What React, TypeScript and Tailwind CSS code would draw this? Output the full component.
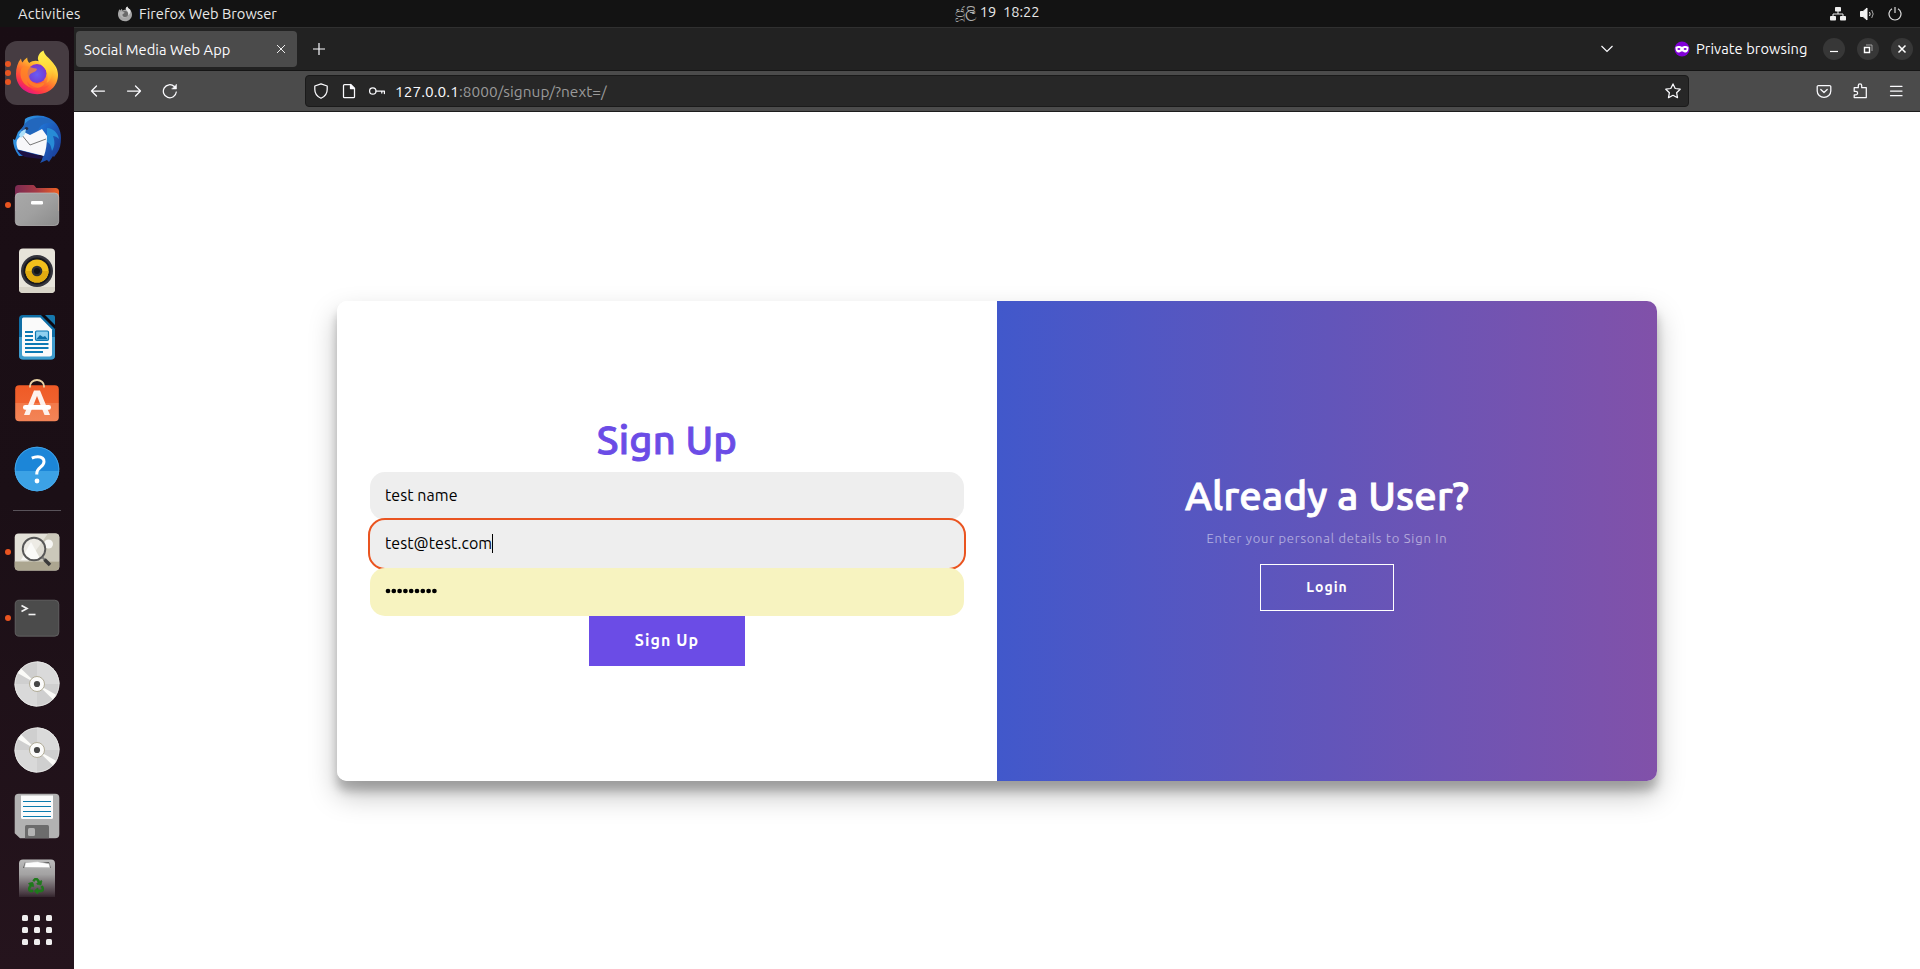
import React from "react";
import { FaRecycle } from "react-icons/fa";

type SvgProps = { children: React.ReactNode };

function DockIcon({ children }: SvgProps) {
  return (
    <svg width="48" height="48" viewBox="0 0 48 48" className="block shrink-0">
      {children}
    </svg>
  );
}

function DockCell({ dots = 0, active = false, children }: { dots?: number; active?: boolean; children: React.ReactNode }) {
  return (
    <div className="relative flex h-[66px] w-[74px] shrink-0 items-center justify-center">
      <div className={active ? "flex h-16 w-16 items-center justify-center rounded-xl bg-[#463c42]" : "flex h-16 w-16 items-center justify-center"}>
        {children}
      </div>
      <div className="absolute left-[5px] top-0 flex h-full flex-col items-center justify-center gap-[2.6px]">
        {Array.from({ length: dots }, (_, i) => (
          <span key={i} className="h-[6px] w-[6px] rounded-full bg-[#e95420]" />
        ))}
      </div>
    </div>
  );
}

function Firefox() {
  return (
    <DockIcon>
      <defs>
        <linearGradient id="ff-body" x1="0.85" y1="0.1" x2="0.25" y2="0.95">
          <stop offset="0" stopColor="#fff44f" />
          <stop offset="0.3" stopColor="#ffb52e" />
          <stop offset="0.58" stopColor="#ff6a30" />
          <stop offset="0.82" stopColor="#ff3647" />
          <stop offset="1" stopColor="#e31587" />
        </linearGradient>
        <linearGradient id="ff-tail" x1="0.5" y1="0" x2="0.6" y2="1">
          <stop offset="0" stopColor="#fff24d" />
          <stop offset="0.6" stopColor="#ffd338" />
          <stop offset="1" stopColor="#ff9a2b" />
        </linearGradient>
        <radialGradient id="ff-globe" cx="0.5" cy="0.55" r="0.6">
          <stop offset="0" stopColor="#6a5cf5" />
          <stop offset="0.6" stopColor="#6f45dc" />
          <stop offset="1" stopColor="#8a2bc6" />
        </radialGradient>
      </defs>
      <path d="M8 9.500c.2 2 .8 3 1.600 4 1-2 2.500-3.500 4.600-5 0 2.200.6 4 2 5.500C20 11 25 11 30 14c5 1 9 4 10 2-.5-1.500-1-2.500-1.500-3.200 4 3.200 6.500 8 6.500 13.200C45 37 36 45.200 24.300 45.200 12 45.200 3 36.500 3 25c0-5.500 1.500-11.500 5-15.500z" fill="url(#ff-body)" />
      <circle cx="24" cy="24.500" r="9.500" fill="url(#ff-globe)" />
      <path d="M30.500 1.500c1 4.500 4.500 6.500 7.500 10 3 3.500 4.500 6 4.500 11-1-2-2-3-3.500-4 1 8-1 13-5.500 15.500 1.500-3 1.500-6.500.5-10-1.500-6.500-8-8.500-9-13.500-.5-3.500 2-7.500 5.500-9z" fill="url(#ff-tail)" />
      <path d="M9 18.500c3.500-1.500 7-1 9.500 0 2 .8 4.500.7 5.500 1.500-.5 2.500-3 3-5 4-2 1-3.500 2.500-2.500 5 2 5 7 7 11 5.500 2-.8 4-.2 4 .6-2 3-6 4.400-10 4.200-8-.5-13.500-6.800-14-13.300-.2-3 .2-5.500 1.500-7.500z" fill="#ff8a25" opacity="0.75" />
      <path d="M14 32c4 7 14 9 22 4-3 4-8 6-13 5.500-5-.5-8-4.500-9-9.500z" fill="#ff4f3c" opacity="0.7" />
    </DockIcon>
  );
}

function Thunderbird() {
  return (
    <DockIcon>
      <defs>
        <linearGradient id="tb" x1="0" y1="0.2" x2="1" y2="0.7">
          <stop offset="0" stopColor="#3aa5e8" />
          <stop offset="0.5" stopColor="#1f6fd0" />
          <stop offset="1" stopColor="#1b3f9a" />
        </linearGradient>
      </defs>
      <path d="M12 4C17 0 28-1 36 3c8 4 12 12 12 20 0 6-1 11-4 15l-3 4-1-1-4 6-2-2-7 3c2-3 3-5 2-8L6 41C2 36 0 30 0 24l2 1 3-8 6-6z" fill="url(#tb)" />
      <path d="M8 16C11 6 20 1 31 3c5 1 9 3 11 6-6-2-12-1-15 3-3 5-4 8-10 9-4 .5-6-2-9-5z" fill="#2267bd" />
      <path d="M34 13c6 0 11 5 12 11-2-2-4-3-6-3 2 5 2 10-1 15-1-5-2-8-5-9z" fill="#278bd6" />
      <path d="M4 25l7-8 6 3 12-6 5 7c0 8-1 14-3 20L5 34.500C3.500 31 3 28 4 25z" fill="#f8f8fa" />
      <path d="M8 19l9 11 16-6" fill="none" stroke="#777" strokeWidth="1" />
      <path d="M4 34.500l26.500 7L28 44l-16-2C8 40 5.500 37.500 4 34.500z" fill="#1c1144" />
      <ellipse cx="13.500" cy="13.500" rx="1.800" ry="1.500" fill="#283048" />
      <path d="M6 20c1.500-3 3.500-5 7-6l-1 5-4 4z" fill="#aee0f8" />
    </DockIcon>
  );
}

function Files() {
  return (
    <DockIcon>
      <defs>
        <linearGradient id="fl-back" x1="0" x2="1">
          <stop offset="0" stopColor="#7a2a52" />
          <stop offset="0.5" stopColor="#a63a45" />
          <stop offset="1" stopColor="#ee6224" />
        </linearGradient>
        <linearGradient id="fl-front" x1="0" y1="0" x2="1" y2="1">
          <stop offset="0" stopColor="#a8a8a8" />
          <stop offset="0.5" stopColor="#a0a0a0" />
          <stop offset="1" stopColor="#8b8b8b" />
        </linearGradient>
      </defs>
      <path d="M2 7.500A3.500 3.500 0 015.500 4h14c1.500 0 2 .6 3 2l.8 1H42.500A3.500 3.500 0 0146 10.500V30H2z" fill="url(#fl-back)" />
      <rect x="2.300" y="12" width="43.400" height="32.500" rx="4" fill="url(#fl-front)" stroke="#bdbdbd" strokeWidth="0.700" />
      <rect x="18" y="20" width="12" height="3.500" rx="1.300" fill="#fff" />
    </DockIcon>
  );
}

function Rhythmbox() {
  return (
    <DockIcon>
      <rect x="6" y="1.500" width="36" height="44.500" rx="4" fill="#e7e4da" />
      <path d="M6 40h36v2a4 4 0 01-4 4H10a4 4 0 01-4-4z" fill="#d8d4c8" />
      <circle cx="24" cy="24" r="16" fill="#34343c" />
      <circle cx="24" cy="24" r="13.600" fill="#17171c" />
      <circle cx="24" cy="24" r="11.600" fill="#f2c01c" />
      <path d="M12.400 24a11.600 11.600 0 0023.200 0z" fill="#e0aa10" />
      <circle cx="24" cy="24" r="5.300" fill="#2d2f33" />
      <circle cx="24" cy="24" r="3" fill="#121215" />
    </DockIcon>
  );
}

function Writer() {
  return (
    <DockIcon>
      <path d="M10 2h18.500L42 15.500V42.500a4 4 0 01-4 4H10a4 4 0 01-4-4V6a4 4 0 014-4z" fill="#0f6ea5" />
      <path d="M6 24h36v18.500a4 4 0 01-4 4H10a4 4 0 01-4-4z" fill="#3e9ccd" />
      <path d="M10.500 4.500h16.800L39 16.500V41a2.500 2.500 0 01-2.500 2.500h-25A2.500 2.500 0 019 41V6a1.500 1.500 0 011.500-1.500z" fill="#fafafa" />
      <path d="M28 2h12a2 2 0 012 2v12z" fill="#0d0910" />
      <path d="M32 2h8a2 2 0 012 2v8z" fill="#1678ad" />
      <path d="M12 19h8M12 23h8M12 27h8M12 31h23.500M12 35h23.500M12 39h18" stroke="#0c79b4" strokeWidth="2" />
      <rect x="22.500" y="18" width="13" height="9.500" rx="1.200" fill="#8fd0f0" stroke="#0c79b4" strokeWidth="1.200" />
      <path d="M23 26.500l4-4.500 3 2 2-1 3 3.500z" fill="#0c6fa8" />
    </DockIcon>
  );
}

function Software() {
  return (
    <DockIcon>
      <defs>
        <linearGradient id="sw" x1="0" y1="0" x2="0" y2="1">
          <stop offset="0" stopColor="#ef5a26" />
          <stop offset="0.49" stopColor="#f0622f" />
          <stop offset="0.5" stopColor="#f37a4a" />
          <stop offset="1" stopColor="#f28457" />
        </linearGradient>
      </defs>
      <rect x="2.200" y="6.200" width="43.600" height="36" rx="4" fill="url(#sw)" />
      <path d="M17 8.500V7a7 6 0 0114 0v1.500" fill="none" stroke="#e9d2a4" strokeWidth="1.800" />
      <path d="M21 11.500h6l10 24.500h-5.500L24 17l-7.500 19H11z" fill="#fdf1ec" />
      <rect x="10" y="26" width="28" height="4.800" rx="2.200" fill="#fff" />
    </DockIcon>
  );
}

function Help() {
  return (
    <DockIcon>
      <circle cx="24" cy="24" r="22.300" fill="#1c86d8" />
      <path d="M1.700 26h44.600A22.300 22.300 0 0124 46.300 22.300 22.300 0 011.700 26z" fill="#3ca2e6" />
      <circle cx="24" cy="24" r="21.800" fill="none" stroke="#4aa8e8" strokeWidth="0.800" />
      <path d="M18.800 13.200c2-1 4-1.500 6-1.500 4 0 6.200 2 6.200 5 0 5-7 6-7.200 11.300v1.500" fill="none" stroke="#fff" strokeWidth="3" />
      <circle cx="24" cy="36" r="2.400" fill="#fff" />
    </DockIcon>
  );
}

function ImageViewer() {
  return (
    <DockIcon>
      <rect x="1.700" y="5.500" width="44.600" height="37" rx="4" fill="#e3e1d8" />
      <path d="M35 5.500h7.300a4 4 0 014 4v24H15z" fill="#cbc8ba" />
      <path d="M1.700 33.500h44.600v5a4 4 0 01-4 4H5.700a4 4 0 01-4-4z" fill="#aca690" />
      <circle cx="35.500" cy="16" r="4.500" fill="#f6f6f3" />
      <path d="M8 32l10-18 10 18z" fill="#f7f7f4" />
      <circle cx="21" cy="21" r="11.300" fill="#fff" fillOpacity="0.350" stroke="#575757" strokeWidth="1.900" />
      <path d="M29.500 29.500l3 3" stroke="#777" strokeWidth="2" />
      <path d="M31.500 31.500l5.500 5.500" stroke="#3b3b3b" strokeWidth="3.600" />
    </DockIcon>
  );
}

function Terminal() {
  return (
    <DockIcon>
      <rect x="2.200" y="6.200" width="43.600" height="36" rx="4" fill="#4b4b4b" stroke="#6a6a6a" strokeWidth="0.800" />
      <path d="M8.500 11.500l5.500 3-5.500 3" fill="none" stroke="#f2f2f2" strokeWidth="1.700" />
      <path d="M15.500 20.500h7" stroke="#f2f2f2" strokeWidth="1.600" />
    </DockIcon>
  );
}

function Disc() {
  return (
    <DockIcon>
      <circle cx="24" cy="24" r="22.400" fill="#cfcfcf" />
      <path d="M24 24V1.600A22.400 22.400 0 0146.400 24z" fill="#dadada" />
      <path d="M24 24v22.400A22.400 22.400 0 011.600 24z" fill="#d9d9d9" />
      <path d="M24 24L4.500 13 8 8.500zM24 24l19.500 11L40 39.500z" fill="#fbfbf8" />
      <circle cx="24" cy="24" r="22" fill="none" stroke="#e6e6e4" strokeWidth="0.800" />
      <circle cx="24" cy="24" r="7.500" fill="#fbfbfa" stroke="#aca68e" strokeWidth="0.900" />
      <circle cx="24" cy="24" r="3.100" fill="#464646" />
    </DockIcon>
  );
}

function Floppy() {
  return (
    <DockIcon>
      <path d="M5.700 1.700h36.600a4 4 0 014 4v36.600a4 4 0 01-4 4H7l-5.300-5V5.700a4 4 0 014-4z" fill="#b2b2b2" />
      <path d="M8 3.500h32v22a1.500 1.500 0 01-1.500 1.500h-29A1.500 1.500 0 018 25.500z" fill="#fbfbfb" />
      <path d="M10 9.500h28M10 14.500h28M10 19.500h28M10 24.500h28" stroke="#0a7bad" strokeWidth="1.100" />
      <path d="M12 46.300V34.500A1.500 1.500 0 0113.500 33h21a1.500 1.500 0 011.500 1.500v11.800z" fill="#6c6c6c" />
      <rect x="15" y="36" width="7" height="8" rx="1.500" fill="#b4b4b4" />
    </DockIcon>
  );
}

function Trash() {
  return (
    <DockIcon>
      <defs>
        <linearGradient id="tr" x1="0" y1="0" x2="0" y2="1">
          <stop offset="0" stopColor="#bcbcbc" />
          <stop offset="0.4" stopColor="#a3a2a2" />
          <stop offset="0.9" stopColor="#4a3c44" />
          <stop offset="1" stopColor="#33252d" />
        </linearGradient>
      </defs>
      <path d="M10 1.500h28a4 4 0 014 4V39H6V5.500a4 4 0 014-4z" fill="url(#tr)" />
      <path d="M10 10L12 4h24l2 6z" fill="#5d5d5d" />
      <path d="M11.500 9.500l1-5 12-.8 11.500 2 1 4z" fill="#fdfdfd" stroke="#c5c5c5" strokeWidth="0.600" />
      <FaRecycle x="15" y="20" width="18" height="18" color="#1f7a1b" stroke="#1f7a1b" strokeWidth="22" />
    </DockIcon>
  );
}

function Dock() {
  return (
    <aside className="flex h-[942px] w-[74px] shrink-0 flex-col bg-linear-to-b from-[#190d14] via-[#1b0f16] to-[#25141d] pt-[13px]">
      <DockCell dots={3} active>
        <Firefox />
      </DockCell>
      <DockCell><Thunderbird /></DockCell>
      <DockCell dots={1}><Files /></DockCell>
      <DockCell><Rhythmbox /></DockCell>
      <DockCell><Writer /></DockCell>
      <DockCell><Software /></DockCell>
      <DockCell><Help /></DockCell>
      <div className="flex h-[17px] shrink-0 items-center justify-center">
        <div className="h-px w-12 bg-[#59535a]" />
      </div>
      <DockCell dots={1}><ImageViewer /></DockCell>
      <DockCell dots={1}><Terminal /></DockCell>
      <DockCell><Disc /></DockCell>
      <DockCell><Disc /></DockCell>
      <DockCell><Floppy /></DockCell>
      <div className="h-12 shrink-0 overflow-hidden">
        <DockCell><Trash /></DockCell>
      </div>
      <div className="flex justify-center pt-[18px]">
        <div className="grid grid-cols-3 gap-[6px]">
          {Array.from({ length: 9 }, (_, i) => (
            <span key={i} className="h-[6px] w-[6px] rounded-[1.5px] bg-[#efeeee]" />
          ))}
        </div>
      </div>
    </aside>
  );
}

function TopBar() {
  return (
    <header className="grid h-[27px] shrink-0 grid-cols-3 bg-[#131313] text-[14.667px] leading-[26px] text-[#e8e8e8]">
      <div className="flex items-center pl-[18px]">
        <span className="w-[99px] whitespace-nowrap tracking-[0.25px]">Activities</span>
        <svg width="16" height="16" viewBox="0 0 48 48" className="mr-[6px] block">
          <path d="M8 9.500l2 4 4.500-5 2 5.500C20 11 24 11 27 12c-2-4 0-8 4-10.500 1 4 4 6 7 9 4 4 7 9 7 15C45 37 36 46 24 46S3 36.500 3 25c0-5.500 1.500-11.500 5-15.500z" fill="#a5a5a5" />
          <path d="M31 1.500c-4 3-6 7-4 10 4 4 8 8 7 16 5-4 8-10 6-16-3-3-8-5-9-10z" fill="#e4e4e4" />
          <circle cx="24" cy="24" r="9" fill="#6a6a6a" />
          <path d="M9 18c5-2 10 0 14 1.500-1 4-7 3-7 8 2 6 8 8 13 6-3 4-14 4-18-4-2-4-3-8-2-11.500z" fill="#b4b4b4" />
        </svg>
        <span className="whitespace-nowrap">Firefox Web Browser</span>
      </div>
      <div className="flex justify-center whitespace-pre pl-[75px] leading-[24px]">
        <span><span className="text-[#b0b0b0]">ජූලි</span> 19  18:22</span>
      </div>
      <div className="flex items-center justify-end gap-[13px] pr-[18px]">
        <svg width="16" height="14" viewBox="0 0 16 14" className="block">
          <g fill="#eee">
            <rect x="5" y="0" width="6" height="4.500" rx="0.800" />
            <rect x="0" y="9" width="6" height="4.500" rx="0.800" />
            <rect x="10" y="9" width="6" height="4.500" rx="0.800" />
          </g>
          <path d="M8 4v3M3 9.500V7h10v2.500" fill="none" stroke="#eee" />
        </svg>
        <svg width="16" height="14" viewBox="0 0 16 14" className="block">
          <path d="M1.500 4.500h2.500L8 1v12L4 9.500H1.500z" fill="#f2f2f2" stroke="#f2f2f2" strokeLinejoin="round" />
          <path d="M10.500 5q1.300 2 0 4" fill="none" stroke="#eee" />
          <path d="M12.700 3q3 4 0 8" fill="none" stroke="#aaa" />
        </svg>
        <svg width="14" height="14" viewBox="0 0 14 14" className="block" fill="none" stroke="#ddd" strokeWidth="1.200">
          <path d="M7 0v6M4 1.800a6 6 0 106 0" />
        </svg>
      </div>
    </header>
  );
}

function WindowButton({ children }: SvgProps) {
  return (
    <div className="flex h-[22px] w-[22px] items-center justify-center rounded-full bg-[#373737]">
      <svg width="10" height="10" viewBox="0 0 10 10" className="block" fill="none" stroke="#fff" strokeWidth="1.200">
        {children}
      </svg>
    </div>
  );
}

function TabStrip() {
  return (
    <div className="flex h-11 shrink-0 items-center border-b border-[#151515] border-t border-t-[#303030] bg-[#222222] text-[14.667px] text-[#fbfbfe]">
      <div className="ml-[2px] flex h-9 w-[221px] items-center justify-between rounded bg-[#4b4b4b] pl-2 pr-3">
        <span className="whitespace-nowrap pt-px tracking-[0.06px]">Social Media Web App</span>
        <svg width="8" height="8" viewBox="0 0 8 8" className="block" stroke="#eee" strokeWidth="1">
          <path d="M0 0l8 8M8 0L0 8" />
        </svg>
      </div>
      <svg width="12" height="12" viewBox="0 0 12 12" className="ml-4 block" stroke="#fbfbfe" strokeWidth="1.200">
        <path d="M6 0v12M0 6h12" />
      </svg>
      <svg width="12" height="8" viewBox="0 0 12 8" className="ml-auto mr-[61px] block" fill="none" stroke="#fbfbfe" strokeWidth="1.200">
        <path d="M.5 1L6 6.500 11.500 1" />
      </svg>
      <svg width="16" height="16" viewBox="0 0 16 16" className="mr-[6px] block">
        <circle cx="8" cy="8" r="7.500" fill="#8000d7" />
        <path d="M1.500 6c2-1.500 5-1 6.500 0 1.500-1 4.500-1.500 6.500 0 0 4-1.200 5.500-3.500 5.500-1.500 0-2.200-1.200-3-1.200s-1.500 1.200-3 1.200C2.700 11.500 1.500 10 1.500 6z" fill="#fff" />
        <ellipse cx="4.900" cy="8" rx="1.500" ry="1" fill="#8000d7" />
        <ellipse cx="11.100" cy="8" rx="1.500" ry="1" fill="#8000d7" />
      </svg>
      <span className="w-[127px] whitespace-nowrap tracking-[0.06px]">Private browsing</span>
      <div className="flex gap-3 pr-[7px]">
        <WindowButton><path d="M1 7.500h8" /></WindowButton>
        <WindowButton>
          <path d="M1.500 3.500h5v5h-5z" strokeWidth="1.400" />
          <path d="M3 1h6v6" stroke="#aaa" strokeWidth="0.900" />
        </WindowButton>
        <WindowButton><path d="M1.500 1.500l7 7M8.500 1.500l-7 7" strokeWidth="1.500" /></WindowButton>
      </div>
    </div>
  );
}

function ToolIcon({ className, children }: { className: string; children: React.ReactNode }) {
  return (
    <svg width="16" height="16" viewBox="0 0 16 16" className={className} fill="none" stroke="#fbfbfe" strokeWidth="1.250" strokeLinecap="round" strokeLinejoin="round">
      {children}
    </svg>
  );
}

function Toolbar() {
  return (
    <div className="flex h-[41px] shrink-0 items-center border-b border-[#1c1c1c] bg-[#4b4b4b]">
      <ToolIcon className="ml-4 block shrink-0"><path d="M14.500 8h-13M6.500 3L1.500 8l5 5" /></ToolIcon>
      <ToolIcon className="ml-5 block shrink-0"><path d="M1.500 8h13M9.500 3l5 5-5 5" /></ToolIcon>
      <ToolIcon className="ml-5 block shrink-0">
        <path d="M14.300 9a6.500 6.500 0 11-2-5.500" />
        <path d="M10 6h4.500V1.500z" fill="#fbfbfe" strokeWidth="0.500" />
      </ToolIcon>
      <div className="ml-[127px] flex h-8 w-[1384px] shrink-0 items-center rounded border border-[#1a1a1a] bg-[#272727] px-[7px]">
        <ToolIcon className="block shrink-0"><path d="M8 .8L14.200 3v3.500c0 4-2.200 7-6.200 8.800-4-1.800-6.200-4.800-6.200-8.800V3z" /></ToolIcon>
        <ToolIcon className="ml-3 block shrink-0">
          <path d="M3.500 1.500h6l4 4v8.200a1 1 0 01-1 1h-9a1 1 0 01-1-1V2.500a1 1 0 011-1z" />
          <path d="M9.500 1.500v4h4z" fill="#fbfbfe" />
        </ToolIcon>
        <ToolIcon className="ml-3 block shrink-0">
          <circle cx="3.800" cy="8" r="3.200" />
          <path d="M7 8h8.400v2.500M12.800 8v2" />
        </ToolIcon>
        <span className="ml-[10px] whitespace-nowrap pt-px text-[15.4px] tracking-[0.05px] text-[#9a9a9a]">
          <span className="text-[#fbfbfe]">127.0.0.1</span>:8000/signup/?next=/
        </span>
        <ToolIcon className="ml-auto block shrink-0"><path d="M8 .9l2.200 4.600 5 .7-3.600 3.500.9 5L8 12.300l-4.500 2.400.9-5L.8 6.200l5-.7z" /></ToolIcon>
      </div>
      <ToolIcon className="ml-auto block shrink-0">
        <path d="M2.500 2.500h11a1.300 1.300 0 011.300 1.300V8A6.800 6.300 0 011.200 8V3.800a1.300 1.300 0 011.300-1.300z" />
        <path d="M4.800 6.500L8 9.500l3.200-3" />
      </ToolIcon>
      <ToolIcon className="ml-5 block shrink-0">
        <path d="M2.200 4.700h4.100V2.600a1.700 1.700 0 013.400 0v2.100h4.600v9.900H2.200v-2.700h1.600a1.700 1.700 0 000-3.600H2.200z" />
      </ToolIcon>
      <ToolIcon className="ml-5 mr-4 block shrink-0"><path d="M2.500 3.300h11.500M2.500 8h11.500M2.500 12.700h11.500" /></ToolIcon>
    </div>
  );
}

function SignUpPage() {
  return (
    <main className="flex flex-1 items-start justify-center bg-white pt-[189px]">
      <div className="flex h-[480px] w-[1320px] overflow-hidden rounded-[10px] shadow-[0_14px_28px_rgba(0,0,0,0.25),0_10px_10px_rgba(0,0,0,0.22)]">
        <section className="flex w-[660px] flex-col items-center bg-white px-[33px] pt-[115px]">
          <h1 className="h-14 whitespace-nowrap text-[40px] font-medium leading-[48px] tracking-[0.2px] text-[#6b4ce6] [-webkit-text-stroke:0.9px_#6b4ce6]">Sign Up</h1>
          <div className="flex h-12 w-[594px] items-center rounded-[15px] bg-[#eeeeee] px-[15px] pb-[2px] text-[16px] text-black">
            <span className="tracking-[0.06px]">test name</span>
          </div>
          <div className="flex h-12 w-[594px] items-center rounded-[15px] bg-[#eeeeee] px-[15px] pb-[2px] text-[16px] text-black outline-2 outline-[#e95420]">
            <span className="tracking-[0.06px]">test@test.com</span>
            <span className="h-[19px] w-px bg-black" />
          </div>
          <div className="z-10 flex h-12 w-[594px] items-center rounded-[15px] bg-[#f7f3c0] px-[15px] pb-[2px]">
            <svg width="54" height="6" viewBox="0 0 54 6" className="block" aria-label="password">
              {Array.from({ length: 9 }, (_, i) => (
                <circle key={i} cx={3 + i * 5.8} cy="3" r="2.350" fill="#000" />
              ))}
            </svg>
          </div>
          <button className="h-[50px] w-[156px] bg-[#6b4ce6] pb-[2px] text-[16px] font-bold tracking-[1.05px] text-white">Sign Up</button>
        </section>
        <section className="flex w-[660px] flex-col items-center bg-linear-to-r from-[#4158cb] via-[#6255ba] to-[#8151a9] pt-[170px] text-white">
          <h1 className="h-[54px] whitespace-nowrap text-[40px] font-medium leading-[50px] tracking-[0.25px] [-webkit-text-stroke:0.9px_#ffffff]">Already a User?</h1>
          <p className="h-[39px] whitespace-nowrap text-[13px] font-light leading-[26px] tracking-[0.8px] text-white/55">Enter your personal details to Sign In</p>
          <button className="h-[47px] w-[134px] border border-white text-[14px] font-bold tracking-[1px]">Login</button>
        </section>
      </div>
    </main>
  );
}

export default function App() {
  return (
    <div className="flex h-[969px] w-[1920px] flex-col overflow-hidden font-['Ubuntu','Noto_Sans',sans-serif]">
      <TopBar />
      <div className="flex flex-1">
        <Dock />
        <div className="flex w-[1846px] flex-col">
          <TabStrip />
          <Toolbar />
          <SignUpPage />
        </div>
      </div>
    </div>
  );
}
